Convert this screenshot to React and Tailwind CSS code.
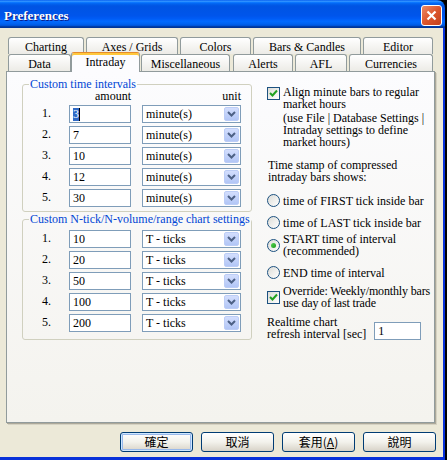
import React from "react";

const serif = "font-['Liberation_Serif','Times_New_Roman',serif]";
const cjk = "font-['Noto_Sans_CJK_TC','Liberation_Sans',sans-serif]";

function Tab({ label, className = "", active = false }) {
  if (active) {
    return (
      <div
        className={`relative z-10 -mt-[2px] -mb-[1px] flex h-[20px] items-center justify-center rounded-t-[3px] border border-b-0 border-[#919b9c] border-t-[#e68b2c] bg-[#fcfcfe] pb-[2px] shadow-[inset_0_2px_0_#ffc83c] ${className}`}
      >
        {label}
      </div>
    );
  }
  return (
    <div
      className={`flex h-[17px] items-center justify-center rounded-t-[3px] border border-b-0 border-[#919b9c] bg-gradient-to-b from-white to-[#ecebe6] pt-[1px] ${className}`}
    >
      {label}
    </div>
  );
}

function Chevron() {
  return (
    <svg width="9" height="6" viewBox="0 0 9 6">
      <path d="M1 1 L4.5 4.5 L8 1" fill="none" stroke="#4d6185" strokeWidth="2" />
    </svg>
  );
}

function Select({ value }) {
  return (
    <div className="ml-[11px] flex h-[18px] w-[99px] items-center justify-between border border-[#7f9db9] bg-white pl-[3px] pr-[1px]">
      <span>{value}</span>
      <div className="flex h-[14px] w-[15px] items-center justify-center rounded-[2px] border border-[#bccdf6] bg-gradient-to-b from-[#d3defd] to-[#b2c6f6]">
        <Chevron />
      </div>
    </div>
  );
}

function Row({ n, value, unit, selected = false }) {
  return (
    <div className="flex h-[18px] items-center">
      <span className="-mt-[3px] w-[27px]">{n}.</span>
      <div className="flex h-[18px] w-[62px] items-center border border-[#7f9db9] bg-white pl-[3px]">
        {selected ? (
          <>
            <span className="bg-[#316ac5] leading-[13px] text-white">{value}</span>
            <span className="h-[13px] w-px bg-black" />
          </>
        ) : (
          value
        )}
      </div>
      <Select value={unit} />
    </div>
  );
}

function Checkbox({ className = "" }) {
  return (
    <div
      className={`flex h-[13px] w-[13px] shrink-0 items-center justify-center border border-[#1c5180] bg-gradient-to-br from-[#dcdcd7] to-white ${className}`}
    >
      <svg width="9" height="9" viewBox="0 0 9 9">
        <path d="M1 4 L3.5 6.5 L8 1.5" fill="none" stroke="#21a121" strokeWidth="2" />
      </svg>
    </div>
  );
}

function Radio({ checked = false, children, className = "" }) {
  return (
    <div className={`flex items-center ${className}`}>
      <div className="flex h-[13px] w-[13px] shrink-0 items-center justify-center rounded-full border border-[#1c5180] bg-gradient-to-br from-[#dcdcd7] to-white">
        {checked && (
          <div className="h-[5px] w-[5px] rounded-full bg-gradient-to-br from-[#55d651] to-[#1d9a1a]" />
        )}
      </div>
      <div className="ml-[3px]">{children}</div>
    </div>
  );
}

function Button({ children, primary = false }) {
  return (
    <div
      className={`flex h-[20px] w-[73px] items-center justify-center rounded-[3px] border border-[#003c74] bg-gradient-to-b from-white via-[#f3f2ec] to-[#d8d3c8] text-[12px] ${cjk} ${
        primary ? "shadow-[inset_0_0_0_1px_#cee7ff,inset_0_0_0_2px_#98b8ea]" : ""
      }`}
    >
      {children}
    </div>
  );
}

export default function App() {
  const times = [3, 7, 10, 12, 30];
  const ticks = [10, 20, 50, 100, 200];

  return (
    <div className={`h-[460px] w-[447px] bg-black text-[12px] leading-[12px] text-black ${serif}`}>
      <div className="flex h-[460px] w-[445px] flex-col overflow-hidden rounded-tr-[8px]">
        {/* title bar */}
        <div className="flex h-[28px] shrink-0 items-center justify-between bg-[linear-gradient(to_bottom,#0058ee_0%,#3593ff_4%,#288eff_6%,#127dff_8%,#036ffc_10%,#0262ee_14%,#0057e5_20%,#0054e3_24%,#0055eb_56%,#005bf5_66%,#026afe_76%,#0062ef_86%,#0052d6_92%,#0040ab_94%,#003092_100%)] pl-[4px] pr-[3px] pt-[3px]">
          <span className="text-[13px] font-bold text-white [text-shadow:1px_1px_0_#0a1883]">
            Preferences
          </span>
          <div className="flex h-[21px] w-[21px] items-center justify-center rounded-[3px] border border-white bg-gradient-to-br from-[#eb8a66] via-[#dc552c] to-[#c2401b]">
            <svg width="11" height="11" viewBox="0 0 11 11">
              <path d="M1.5 1.5 L9.5 9.5 M9.5 1.5 L1.5 9.5" stroke="white" strokeWidth="2.2" />
            </svg>
          </div>
        </div>

        {/* dialog body */}
        <div className="flex flex-1 flex-col border-b-[3px] border-r-[2px] border-[#0831d9] bg-[#ece9d8] pl-[6px] pt-[9px]">
          <div className="flex">
            <Tab label="Charting" className="ml-[2px] w-[76px]" />
            <Tab label="Axes / Grids" className="ml-[2px] w-[92px]" />
            <Tab label="Colors" className="ml-[2px] w-[71px]" />
            <Tab label="Bars & Candles" className="ml-[2px] w-[108px]" />
            <Tab label="Editor" className="ml-[2px] w-[70px]" />
          </div>
          <div className="flex items-start">
            <Tab label="Data" className="ml-[2px] w-[63px]" />
            <Tab label="Intraday" className="w-[69px]" active />
            <Tab label="Miscellaneous" className="ml-[1px] w-[89px]" />
            <Tab label="Alerts" className="ml-[3px] w-[60px]" />
            <Tab label="AFL" className="ml-[2px] w-[52px]" />
            <Tab label="Currencies" className="ml-[2px] w-[84px]" />
          </div>

          {/* tab page */}
          <div className="flex h-[352px] w-[429px] items-start border border-[#919b9c] bg-gradient-to-b from-[#fcfcfe] to-[#f4f3ee] pl-[15px] pt-[6px] shadow-[1px_1px_0_#aca899,2px_2px_0_#d5d2c3]">
            <div className="flex w-[230px] flex-col">
              <fieldset className="w-[230px] rounded-[3px] border border-[#d0d0bf] pb-[4px]">
                <legend className="ml-[6px] px-[1px] text-[#0046d5]">Custom time intervals</legend>
                <div className="pl-[19px]">
                  <div className="flex h-[12px]">
                    <span className="w-[27px]" />
                    <span className="w-[62px] text-right">amount</span>
                    <span className="ml-[11px] w-[99px] text-right">unit</span>
                  </div>
                  <div className="mt-[3px] flex flex-col gap-[3px]">
                    {times.map((v, i) => (
                      <Row key={v} n={i + 1} value={v} unit="minute(s)" selected={i === 0} />
                    ))}
                  </div>
                </div>
              </fieldset>

              <fieldset className="mt-[1px] w-[230px] rounded-[3px] border border-[#d0d0bf] pb-[7px]">
                <legend className="ml-[6px] px-[1px] text-[#0046d5]">
                  Custom N-tick/N-volume/range chart settings
                </legend>
                <div className="mt-[5px] flex flex-col gap-[3px] pl-[19px]">
                  {ticks.map((v, i) => (
                    <Row key={v} n={i + 1} value={v} unit="T - ticks" />
                  ))}
                </div>
              </fieldset>
            </div>

            <div className="ml-[15px] mt-[8px] flex flex-col whitespace-nowrap">
              <div className="flex">
                <Checkbox className="mt-[1px]" />
                <div className="ml-[3px]">
                  <div>
                    Align minute bars to regular
                    <br />
                    market hours
                  </div>
                  <div className="mt-[2px]">
                    (use File | Database Settings |
                    <br />
                    Intraday settings to define
                    <br />
                    market hours)
                  </div>
                </div>
              </div>

              <div className="ml-[1px] mt-[11px]">
                Time stamp of compressed
                <br />
                intraday bars shows:
              </div>

              <Radio className="mt-[11px]">time of FIRST tick inside bar</Radio>
              <Radio className="mt-[9px]">time of LAST tick inside bar</Radio>
              <Radio className="mt-[4px]" checked>
                START time of interval
                <br />
                (recommended)
              </Radio>
              <Radio className="mt-[9px]">END time of interval</Radio>

              <div className="mt-[6px] flex items-center">
                <Checkbox />
                <div className="ml-[3px] tracking-[-0.15px]">
                  Override: Weekly/monthly bars
                  <br />
                  use day of last trade
                </div>
              </div>

              <div className="mt-[7px] flex items-end">
                <div>
                  Realtime chart
                  <br />
                  refresh interval [sec]
                </div>
                <div className="ml-[8px] flex h-[18px] w-[47px] items-center border border-[#7f9db9] bg-white pl-[3px]">
                  1
                </div>
              </div>
            </div>
          </div>

          {/* buttons */}
          <div className="mt-[9px] flex justify-end gap-[8px] pr-[7px]">
            <Button primary>確定</Button>
            <Button>取消</Button>
            <Button>
              套用(<span className="underline">A</span>)
            </Button>
            <Button>說明</Button>
          </div>
        </div>
      </div>
    </div>
  );
}
